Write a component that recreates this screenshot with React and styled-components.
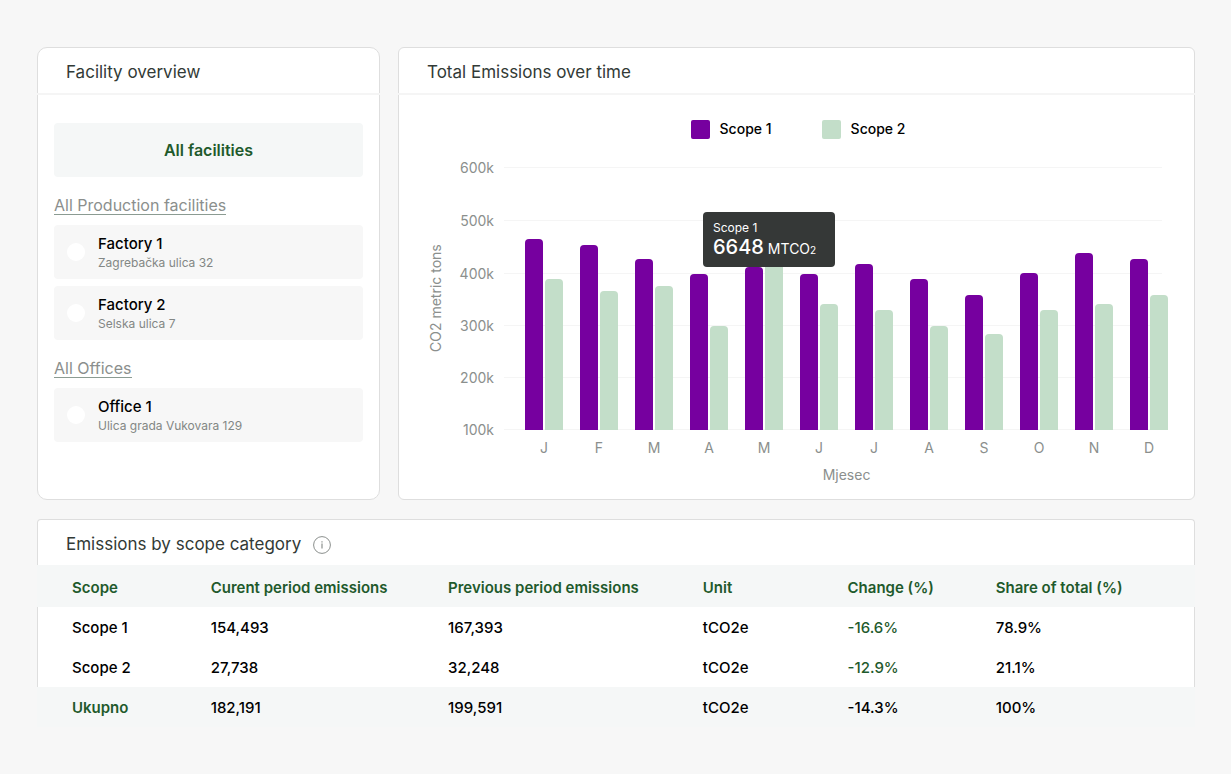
import React, { useState } from 'react';
import styled, { createGlobalStyle } from 'styled-components';

const GlobalStyle = createGlobalStyle`
  * {
    box-sizing: border-box;
  }
  body {
    margin: 0;
    background: #f7f7f7;
    color: #000;
    font-family: Inter, 'Liberation Sans', sans-serif;
  }
`;

const Page = styled.main`
  display: flex;
  flex-direction: column;
  gap: 19px;
  padding: 47px 36px 47px 37px;
`;

const TopRow = styled.div`
  display: grid;
  grid-template-columns: 343fr 797fr;
  gap: 18px;
`;

const Card = styled.section`
  background: #fff;
  border: 1px solid #dedede;
  border-radius: ${({ $radius }) => $radius};
`;

const CardHeader = styled.header`
  display: flex;
  align-items: center;
  gap: 12px;
  height: 47px;
  padding: 2px 29px 0;
  margin: 0 -1px;
  border-bottom: 2px solid #f5f5f5;
`;

const CardTitle = styled.h2`
  margin: 0;
  font-size: 17px;
  font-weight: 400;
  line-height: 24px;
  color: #323a36;
`;

const FacilityBody = styled.div`
  padding: 28px 16px 57px;
`;

const AllButton = styled.button`
  display: block;
  width: 100%;
  height: 54px;
  border: none;
  border-radius: 4px;
  background: #f5f7f7;
  color: #1f5a2c;
  font-family: inherit;
  font-size: 16px;
  font-weight: 600;
  cursor: pointer;
`;

const GroupLink = styled.a`
  display: block;
  width: fit-content;
  margin: 18px 0 10px;
  padding-top: 2px;
  font-size: 16px;
  line-height: 17px;
  color: #8b8f8d;
  text-decoration: none;
  border-bottom: 1px solid #8b9b92;
`;

const FacilityList = styled.div`
  display: flex;
  flex-direction: column;
  gap: 7px;
`;

const FacilityItem = styled.label`
  display: flex;
  align-items: center;
  gap: 13px;
  height: 54px;
  padding: 0 13px;
  border-radius: 4px;
  background: #f7f7f7;
  cursor: pointer;
`;

const Radio = styled.input`
  appearance: none;
  width: 18px;
  height: 18px;
  margin: 0;
  border-radius: 50%;
  background: #fff;
  cursor: pointer;

  &:checked {
    border: 5px solid #1f5a2c;
  }
`;

const FacilityText = styled.span`
  display: flex;
  flex-direction: column;
  padding-top: 2px;
`;

const FacilityName = styled.span`
  font-size: 15px;
  font-weight: 500;
  line-height: 20px;
`;

const FacilityAddress = styled.span`
  font-size: 12px;
  line-height: 18px;
  color: #838785;
`;

const ChartBody = styled.div`
  padding: 25px 26px 15px 29px;
`;

const Legend = styled.div`
  display: flex;
  justify-content: center;
  gap: 50px;
`;

const LegendItem = styled.div`
  display: flex;
  align-items: flex-start;
  gap: 10px;
  font-size: 14px;
  font-weight: 500;
  line-height: 17px;
`;

const Swatch = styled.span`
  width: 19px;
  height: 19px;
  border-radius: 2px;
  background: ${({ $color }) => $color};
`;

const ChartGrid = styled.div`
  display: grid;
  grid-template-columns: 16px 50px 1fr;
  margin-top: 28px;
`;

const YTitle = styled.div`
  writing-mode: vertical-rl;
  transform: rotate(180deg);
  text-align: center;
  font-size: 14px;
  line-height: 16px;
  color: #8b8f8d;
`;

const tickRows = '53px 53px 52px 52px 52px 1px';

const YTicks = styled.div`
  display: grid;
  grid-template-rows: ${tickRows};
  justify-items: end;
  font-size: 14px;
  line-height: 16px;
  color: #8b8f8d;

  span {
    margin-top: -7px;
  }
`;

const Plot = styled.div`
  display: grid;
  margin-left: 10px;

  > * {
    grid-area: 1 / 1;
  }
`;

const GridLines = styled.div`
  display: grid;
  grid-template-rows: ${tickRows};
  margin-right: 6px;

  span {
    height: 1px;
    background: #f5f5f5;
  }
`;

const BarArea = styled.div`
  display: flex;
  justify-content: space-between;
  margin-left: 21px;
`;

const MonthBars = styled.div`
  position: relative;
  display: flex;
  align-items: flex-end;
  gap: 2px;
`;

const Bar = styled.div`
  width: 18px;
  border-radius: 4px 4px 0 0;
  background: ${({ $color }) => $color};
`;

const Tooltip = styled.div`
  position: absolute;
  left: -42px;
  bottom: 163px;
  z-index: 1;
  width: 132px;
  height: 55px;
  padding: 8px 10px;
  border-radius: 4px;
  background: #353837;
  color: #fff;
  font-size: 12px;
  line-height: 16px;
  white-space: nowrap;
`;

const TooltipValue = styled.div`
  font-size: 14px;
  line-height: 22px;

  strong {
    font-size: 20px;
    font-weight: 500;
  }
  small {
    font-size: 10px;
  }
`;

const MonthLabels = styled.div`
  grid-column: 3;
  display: flex;
  justify-content: space-between;
  margin: 10px 0 0 31px;
  font-size: 14px;
  line-height: 16px;
  color: #8b8f8d;

  span {
    width: 38px;
    text-align: center;
  }
`;

const XTitle = styled.div`
  grid-column: 3;
  margin: 11px 0 0 31px;
  text-align: center;
  font-size: 14px;
  line-height: 16px;
  color: #8b8f8d;
`;

const TableHeader = styled.header`
  display: flex;
  align-items: center;
  gap: 12px;
  height: 46px;
  padding: 3px 28px 0;
  background: #fff;
  border: 1px solid #dedede;
  border-bottom: none;
  border-radius: 4px 4px 0 0;
`;

const InfoButton = styled.button`
  display: flex;
  padding: 2px 0 0;
  border: none;
  background: none;
  color: #8b8f8d;
  cursor: pointer;
`;

const Table = styled.table`
  width: 100%;
  table-layout: fixed;
  border-collapse: separate;
  border-spacing: 0;
  font-size: 15px;
  line-height: 20px;
  text-align: left;

  th,
  td {
    height: 40px;
    padding: 2px 0 0;
    font-weight: 500;
  }
  th:first-child {
    padding-left: 35px;
  }
  thead th {
    height: 42px;
    padding-top: 3px;
    font-weight: 600;
    color: #1f5a2c;
  }
`;

const Col = styled.col`
  width: ${({ $width }) => $width};
`;

const BodyRow = styled.tr`
  background: #fff;

  th:first-child {
    padding-left: 34px;
    border-left: 1px solid #dedede;
  }
  td:last-child {
    border-right: 1px solid #dedede;
  }
`;

const BandRow = styled.tr`
  background: #f5f7f7;

  tfoot & th {
    font-weight: 600;
    color: #1f5a2c;
  }
`;

const Change = styled.td`
  color: #1f5a2c;
`;

const purple = '#76009f';
const mint = '#c3dec9';

const groups = [
  {
    title: 'All Production facilities',
    items: [
      { name: 'Factory 1', address: 'Zagrebačka ulica 32' },
      { name: 'Factory 2', address: 'Selska ulica 7' },
    ],
  },
  {
    title: 'All Offices',
    items: [{ name: 'Office 1', address: 'Ulica grada Vukovara 129' }],
  },
];

const ticks = ['600k', '500k', '400k', '300k', '200k', '100k'];

// bar heights in px, scope 1 then scope 2
const months = [
  { label: 'J', bars: [191, 151] },
  { label: 'F', bars: [185, 139] },
  { label: 'M', bars: [171, 144] },
  { label: 'A', bars: [156, 104] },
  { label: 'M', bars: [163, 171], tooltip: '6648' },
  { label: 'J', bars: [156, 126] },
  { label: 'J', bars: [166, 120] },
  { label: 'A', bars: [151, 104] },
  { label: 'S', bars: [135, 96] },
  { label: 'O', bars: [157, 120] },
  { label: 'N', bars: [177, 126] },
  { label: 'D', bars: [171, 135] },
];

const columns = [
  { label: 'Scope', width: '15%' },
  { label: 'Curent period emissions', width: '20.5%' },
  { label: 'Previous period emissions', width: '22%' },
  { label: 'Unit', width: '12.5%' },
  { label: 'Change (%)', width: '12.8%' },
  { label: 'Share of total (%)', width: 'auto' },
];

const rows = [
  ['Scope 1', '154,493', '167,393', 'tCO2e', '-16.6%', '78.9%'],
  ['Scope 2', '27,738', '32,248', 'tCO2e', '-12.9%', '21.1%'],
];

const InfoIcon = () => (
  <svg width="18" height="18" viewBox="0 0 18 18" fill="none" stroke="currentColor">
    <circle cx="9" cy="9" r="8.4" />
    <path d="M9 7.6v4.8M9 5.2v1.3" strokeWidth="1.2" />
  </svg>
);

const FacilityOverview = () => {
  const [selected, setSelected] = useState(null);

  return (
    <Card $radius="10px">
      <CardHeader>
        <CardTitle>Facility overview</CardTitle>
      </CardHeader>
      <FacilityBody>
        <AllButton type="button" onClick={() => setSelected(null)}>
          All facilities
        </AllButton>
        {groups.map((group) => (
          <div key={group.title}>
            <GroupLink href="#">{group.title}</GroupLink>
            <FacilityList>
              {group.items.map(({ name, address }) => (
                <FacilityItem key={name}>
                  <Radio
                    type="radio"
                    name="facility"
                    checked={selected === name}
                    onChange={() => setSelected(name)}
                  />
                  <FacilityText>
                    <FacilityName>{name}</FacilityName>
                    <FacilityAddress>{address}</FacilityAddress>
                  </FacilityText>
                </FacilityItem>
              ))}
            </FacilityList>
          </div>
        ))}
      </FacilityBody>
    </Card>
  );
};

const EmissionsChart = () => (
  <Card $radius="6px">
    <CardHeader>
      <CardTitle>Total Emissions over time</CardTitle>
    </CardHeader>
    <ChartBody>
      <Legend>
        <LegendItem>
          <Swatch $color={purple} />
          Scope 1
        </LegendItem>
        <LegendItem>
          <Swatch $color={mint} />
          Scope 2
        </LegendItem>
      </Legend>
      <ChartGrid>
        <YTitle>CO2 metric tons</YTitle>
        <YTicks>
          {ticks.map((tick) => (
            <span key={tick}>{tick}</span>
          ))}
        </YTicks>
        <Plot>
          <GridLines>
            {ticks.map((tick) => (
              <span key={tick} />
            ))}
          </GridLines>
          <BarArea>
            {months.map(({ bars, tooltip }, i) => (
              <MonthBars key={i}>
                <Bar $color={purple} style={{ height: bars[0] }} />
                <Bar $color={mint} style={{ height: bars[1] }} />
                {tooltip && (
                  <Tooltip>
                    Scope 1
                    <TooltipValue>
                      <strong>{tooltip}</strong> MTCO<small>2</small>
                    </TooltipValue>
                  </Tooltip>
                )}
              </MonthBars>
            ))}
          </BarArea>
        </Plot>
        <MonthLabels>
          {months.map(({ label }, i) => (
            <span key={i}>{label}</span>
          ))}
        </MonthLabels>
        <XTitle>Mjesec</XTitle>
      </ChartGrid>
    </ChartBody>
  </Card>
);

const ScopeTable = () => (
  <section>
    <TableHeader>
      <CardTitle>Emissions by scope category</CardTitle>
      <InfoButton type="button" aria-label="Info">
        <InfoIcon />
      </InfoButton>
    </TableHeader>
    <Table>
      <colgroup>
        {columns.map(({ label, width }) => (
          <Col key={label} $width={width} />
        ))}
      </colgroup>
      <thead>
        <BandRow>
          {columns.map(({ label }) => (
            <th key={label} scope="col">
              {label}
            </th>
          ))}
        </BandRow>
      </thead>
      <tbody>
        {rows.map(([scope, current, previous, unit, change, share]) => (
          <BodyRow key={scope}>
            <th scope="row">{scope}</th>
            <td>{current}</td>
            <td>{previous}</td>
            <td>{unit}</td>
            <Change>{change}</Change>
            <td>{share}</td>
          </BodyRow>
        ))}
      </tbody>
      <tfoot>
        <BandRow>
          <th scope="row">Ukupno</th>
          <td>182,191</td>
          <td>199,591</td>
          <td>tCO2e</td>
          <td>-14.3%</td>
          <td>100%</td>
        </BandRow>
      </tfoot>
    </Table>
  </section>
);

const App = () => (
  <>
    <GlobalStyle />
    <Page>
      <TopRow>
        <FacilityOverview />
        <EmissionsChart />
      </TopRow>
      <ScopeTable />
    </Page>
  </>
);

export default App;
